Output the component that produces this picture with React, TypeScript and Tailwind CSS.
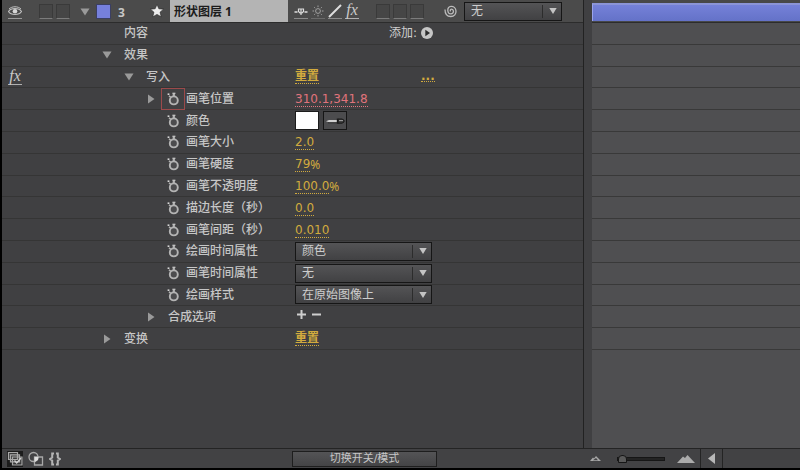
import type { ReactNode } from 'react'

type Row = {
  label: string
  level: 0 | 1 | 2
  arrow?: 'open' | 'closed'
  timer?: boolean
  active?: boolean
  fx?: boolean
  value?: ReactNode
}

const indents = ['pl-0', 'pl-[22px]', 'pl-[44px]']

const Arrow = ({ open }: { open: boolean }) => (
  <svg className="w-[10px] h-[10px]" viewBox="0 0 10 10" fill="#9a9a9a">
    {open ? <path d="M0.5 1.5h9L5 8.5z" /> : <path d="M2 0.5v9L8.5 5z" />}
  </svg>
)

const Stopwatch = () => (
  <svg className="w-3 h-[14px]" viewBox="0 0 12 14" fill="none" stroke="#b4b4b4">
    <circle cx="6.8" cy="8.4" r="4" fill="#4c4c4e" strokeWidth="1.9" />
    <path d="M6.8 4.5V2" strokeWidth="2.2" />
    <path d="M5.4 1.3h3" stroke="#d0d0d0" strokeWidth="1.2" />
    <path d="M0.6 2.2h1.8" stroke="#d8d8d8" strokeWidth="1.6" />
    <path d="M2 3.8l1.8 1.6" strokeWidth="1.5" />
  </svg>
)

const Fx = () => (
  <span className="block w-[14px] h-4 border-b border-[#b0b0b0] text-center font-['Liberation_Serif',serif] italic text-base leading-[14px] text-[#cacaca]">
    fx
  </span>
)

const Value = ({ text, suffix, red, label }: { text: string; suffix?: string; red?: boolean; label: string }) => (
  <button aria-label={label} className={red ? 'flex pt-[2px] text-[#e0747c]' : 'flex pt-[2px] text-[#d2ab3e]'}>
    <span className="border-b border-dotted border-current leading-[13px]">{text}</span>
    <span className="font-['Noto_Sans',sans-serif] leading-[13px]">{suffix}</span>
  </button>
)

const Reset = ({ label }: { label: string }) => (
  <button aria-label={label} className="border-b border-dotted border-[#d2ab3e] text-[#d2ab3e] font-bold leading-[14px]">
    重置
  </button>
)

const Dropdown = ({ label, options, wide }: { label: string; options: string[]; wide?: boolean }) => (
  <div className={wide ? 'relative w-[137px] shrink-0' : 'relative w-[98px] shrink-0'}>
    <select
      aria-label={label}
      className="block appearance-none w-full h-[19px] pl-[6px] border border-[#161616] bg-linear-to-b from-[#545456] to-[#414143] text-[#cecece] leading-[16px]"
    >
      {options.map((o) => (
        <option key={o}>{o}</option>
      ))}
    </select>
    <span className="pointer-events-none absolute inset-y-[3px] right-[5px] flex items-center border-l border-[#2c2c2c] pl-[6px]">
      <svg className="w-2 h-2" viewBox="0 0 8 8" fill="#c4c4c4">
        <path d="M0.3 1h7.4L4 7z" />
      </svg>
    </span>
  </div>
)

const Slot = () => <button aria-label="开关" className="w-[14px] h-[15px] border border-[#3a3a3a] border-b-[#7c7c7c] bg-[#464646]" />

const rows: Row[] = [
  {
    label: '内容',
    level: 0,
    value: (
      <button className="ml-[94px] flex items-center gap-1 text-[#cecece]">
        添加:
        <svg className="w-3 h-3" viewBox="0 0 12 12">
          <circle cx="6" cy="6" r="6" fill="#c6c6c6" />
          <path d="M4.3 2.8v6.4L9 6z" fill="#2c2c2c" />
        </svg>
      </button>
    ),
  },
  { label: '效果', level: 0, arrow: 'open' },
  {
    label: '写入',
    level: 1,
    arrow: 'open',
    fx: true,
    value: (
      <>
        <Reset label="重置写入" />
        <button aria-label="选项" className="ml-[102px] border-b border-dotted border-[#d2ab3e] text-[#d2ab3e] font-bold leading-[10px]">
          ...
        </button>
      </>
    ),
  },
  { label: '画笔位置', level: 2, arrow: 'closed', timer: true, active: true, value: <Value label="画笔位置" text="310.1,341.8" red /> },
  {
    label: '颜色',
    level: 2,
    timer: true,
    value: (
      <div className="flex gap-1">
        <button aria-label="颜色" className="w-6 h-[19px] border border-[#1c1c1c] bg-white" />
        <button aria-label="吸管" className="flex items-center justify-center w-6 h-[19px] border border-[#161616] bg-[#4c4c4e]">
          <svg className="w-5 h-2" viewBox="0 0 20 8">
            <path d="M1 4.2L4 3h9v2.2H4z" fill="#d0d0d0" />
            <path d="M3 5.8h10" stroke="#222" strokeWidth="0.8" />
            <path d="M12.5 1.5v5.2" stroke="#1c1c1c" strokeWidth="1.4" />
            <path d="M13 2h4l2 1.2v1.8L17 6.2h-4z" fill="#3a3a3a" stroke="#181818" />
            <path d="M14 3.6h4" stroke="#a0a0a0" />
          </svg>
        </button>
      </div>
    ),
  },
  { label: '画笔大小', level: 2, timer: true, value: <Value label="画笔大小" text="2.0" /> },
  { label: '画笔硬度', level: 2, timer: true, value: <Value label="画笔硬度" text="79" suffix="%" /> },
  { label: '画笔不透明度', level: 2, timer: true, value: <Value label="画笔不透明度" text="100.0" suffix="%" /> },
  { label: '描边长度（秒）', level: 2, timer: true, value: <Value label="描边长度" text="0.0" /> },
  { label: '画笔间距（秒）', level: 2, timer: true, value: <Value label="画笔间距" text="0.010" /> },
  { label: '绘画时间属性', level: 2, timer: true, value: <Dropdown wide label="绘画时间属性" options={['颜色', '无']} /> },
  { label: '画笔时间属性', level: 2, timer: true, value: <Dropdown wide label="画笔时间属性" options={['无', '大小']} /> },
  { label: '绘画样式', level: 2, timer: true, value: <Dropdown wide label="绘画样式" options={['在原始图像上', '在透明背景上']} /> },
  {
    label: '合成选项',
    level: 2,
    arrow: 'closed',
    value: (
      <div className="flex gap-[6px] pl-[2px] pb-1">
        <button aria-label="添加选项">
          <svg className="block w-[9px] h-[9px]" viewBox="0 0 9 9" stroke="#cecece" strokeWidth="2">
            <path d="M4.5 0v9M0 4.5h9" />
          </svg>
        </button>
        <button aria-label="移除选项">
          <svg className="block w-[9px] h-[9px]" viewBox="0 0 9 9" stroke="#cecece" strokeWidth="2">
            <path d="M0 4.5h9" />
          </svg>
        </button>
      </div>
    ),
  },
  { label: '变换', level: 0, arrow: 'closed', value: <Reset label="重置变换" /> },
]

const PropertyRow = ({ row }: { row: Row }) => (
  <div className="flex items-center border-b border-[#353535]">
    <div className="flex items-center shrink-0 w-[293px]">
      <div className="w-[94px] pl-[6px]">{row.fx && <Fx />}</div>
      <div className={indents[row.level]}>
        <div className="flex justify-center w-[22px]">{row.arrow && <Arrow open={row.arrow === 'open'} />}</div>
      </div>
      {row.timer && (
        <button
          aria-label={'关键帧 ' + row.label}
          className={row.active ? 'flex items-center justify-center w-[22px] h-5 ring-1 ring-[#9c4a4b]' : 'flex items-center justify-center w-[22px] h-5'}
        >
          <Stopwatch />
        </button>
      )}
      <span className={row.timer ? 'ml-[2px] font-medium' : 'ml-[6px] font-medium'}>{row.label}</span>
    </div>
    {row.value}
  </div>
)

const LayerHeader = () => (
  <div className="flex items-center h-[23px] border-b border-[#2c2c2c] bg-[#4b4b4b]">
    <button aria-label="可见性" className="ml-[6px] w-[14px] h-4 border-b border-[#9a9a9a]">
      <svg className="w-[14px] h-3" viewBox="0 0 14 12" fill="none" stroke="#c0c0c0">
        <path d="M0.5 6.5C3 2.5 11 2.5 13.5 6.5C11 10.5 3 10.5 0.5 6.5z" strokeWidth="1.2" />
        <circle cx="7" cy="6.3" r="2.3" fill="#d8d8d8" stroke="none" />
        <path d="M1 4C4 1 10 1 13 4" />
      </svg>
    </button>
    <div className="flex gap-[3px] ml-[17px]">
      <Slot />
      <Slot />
    </div>
    <button aria-label="折叠图层" className="ml-[10px] pt-[2px]">
      <Arrow open />
    </button>
    <span className="ml-[6px] size-[15px] border border-[#3b3f63] bg-[#7680dc]" />
    <span className="ml-[7px] w-[32px] pt-[3px] font-['Noto_Sans',sans-serif] font-bold">3</span>
    <svg className="size-[14px] shrink-0" viewBox="0 0 12 12" fill="#ececec" stroke="#222" strokeWidth="0.5">
      <path d="M6 0.5l1.6 3.6 4 0.3L8.6 7 9.6 11 6 8.9 2.4 11 3.4 7 0.4 4.4l4-0.3z" />
    </svg>
    <span className="ml-[6px] w-[118px] h-full pt-[1px] bg-[#b4b4b4] pl-1 text-[#1c1c1c] font-['Noto_Sans','Noto_Sans_CJK_SC',sans-serif] font-bold leading-[22px]">
      形状图层 1
    </span>
    <div className="flex gap-[3px] ml-[6px]">
      <button aria-label="消隐" className="w-[14px] h-4 border-b border-[#8a8a8a]">
        <svg className="w-[14px] h-3" viewBox="0 0 14 12" fill="none" stroke="#dedede">
          <path d="M0.5 7h3M10.5 7h3" strokeWidth="1.4" />
          <path d="M4.5 4h5v2.5L8 8H6L4.5 6.5zM7 4v6" strokeWidth="1.2" />
        </svg>
      </button>
      <button aria-label="折叠变换" className="w-[14px] h-4 border-b border-[#6a6a6a]">
        <svg className="w-[14px] h-3" viewBox="0 0 14 12" fill="none" stroke="#a0a0a0">
          <circle cx="7" cy="6" r="2.4" />
          <path d="M7 0.5v1.6M7 9.9v1.6M1.5 6h1.6M10.9 6h1.6M3.2 2.2l1 1M9.8 8.8l1 1M3.2 9.8l1-1M9.8 3.2l1-1" />
        </svg>
      </button>
      <button aria-label="品质" className="w-[14px] h-4 border-b border-[#8a8a8a]">
        <svg className="w-[14px] h-[14px]" viewBox="0 0 14 14" stroke="#dedede" strokeWidth="2">
          <path d="M1 13L13 1" />
        </svg>
      </button>
      <button aria-label="效果">
        <Fx />
      </button>
    </div>
    <div className="flex gap-[3px] ml-[17px]">
      <Slot />
      <Slot />
      <Slot />
    </div>
    <svg className="ml-[20px] mr-[7px] size-[13px] shrink-0" viewBox="0 0 13 13" fill="none" stroke="#bcbcbc" strokeWidth="1.3">
      <path d="M1 4.5C1 8.8 3 11.5 6.8 11.5C10.3 11.5 12.2 9 12 6C11.8 3 9.5 1.2 7 1.3C4.8 1.4 3.6 3.5 3.8 5.8C4 8 5.4 9 7 8.9C8.8 8.8 9.6 7.3 9.4 6C9.2 4.6 8 4 7 4.3C6.2 4.6 6 5.6 6.6 6.4" />
    </svg>
    <Dropdown label="父级" options={['无']} />
  </div>
)

const Footer = () => (
  <div className="flex items-center h-5 border-t border-[#242424] bg-[#424244]">
    <div className="flex items-center shrink-0 w-[290px] gap-[5px] pl-[5px]">
      <button aria-label="图层开关" className="bg-[#1c1c1c]">
        <svg className="block size-4" viewBox="0 0 16 16" fill="#3a3a3a" stroke="#a8a8a8" strokeWidth="1.2">
          <path d="M1.5 1.5h9v7h-9zM3.5 3.8h9v7h-9zM5.5 6h9.5v8H5.5z" />
          <path d="M7.5 9.5l2.2 2.5L14 7" fill="none" stroke="#d0d0d0" strokeWidth="1.4" />
        </svg>
      </button>
      <button aria-label="传递控制">
        <svg className="block size-4" viewBox="0 0 16 16" fill="none" stroke="#a8a8a8" strokeWidth="1.3">
          <circle cx="5.5" cy="6" r="4.5" />
          <path d="M6.5 6h8v8h-8z" />
          <path d="M6.5 6h4l-0.5 3-3.5 2z" fill="#dcdcdc" stroke="none" />
        </svg>
      </button>
      <button aria-label="入点出点">
        <svg className="block w-3 h-[14px]" viewBox="0 0 12 14" fill="none" stroke="#b4b4b4" strokeWidth="2">
          <path d="M5 1.5H3.2v4L1 7l2.2 1.5v4H5M7 1.5h1.8v4L11 7 8.8 8.5v4H7" />
        </svg>
      </button>
    </div>
    <button className="shrink-0 w-[145px] h-4 border border-[#1e1e1e] bg-linear-to-b from-[#545456] to-[#444446] text-[11px] leading-[14px]">
      切换开关/模式
    </button>
    <div className="flex items-center ml-[153px] h-full">
      <svg className="w-[11px] h-[5px]" viewBox="0 0 11 5" fill="#a8a8a8">
        <path d="M0 5L3 1.6 4 2.4 6 0 11 5zM3 4.2h5L6 2z" fillRule="evenodd" />
      </svg>
      <input
        type="range"
        aria-label="缩放"
        defaultValue={0}
        className="appearance-none ml-4 mr-3 w-[48px] h-[4px] border border-[#161616] bg-[#242424] [&::-webkit-slider-thumb]:appearance-none [&::-webkit-slider-thumb]:w-[9px] [&::-webkit-slider-thumb]:h-2 [&::-webkit-slider-thumb]:rounded-t-sm [&::-webkit-slider-thumb]:border [&::-webkit-slider-thumb]:border-[#161616] [&::-webkit-slider-thumb]:bg-[#5a5a5a]"
      />
      <svg className="w-[18px] h-2" viewBox="0 0 18 8" fill="#ababab">
        <path d="M0 8L6 1.5 8 3 10.5 0 18 8z" />
      </svg>
      <button aria-label="向左滚动" className="flex items-center justify-center ml-[5px] w-[23px] h-full border-x border-[#242424]">
        <svg className="w-[7px] h-[11px]" viewBox="0 0 7 11" fill="#b8b8b8">
          <path d="M7 0v11L0 5.5z" />
        </svg>
      </button>
    </div>
  </div>
)

const App = () => {
  return (
    <div className="flex flex-col min-h-screen border-l-2 border-b-2 border-black bg-[#404042] text-[#c6c6c6] text-xs font-['DejaVu_Sans','Noto_Sans_CJK_SC',sans-serif]">
      <div className="flex grow">
        <div className="shrink-0 w-[582px] border-r border-[#222]">
          <LayerHeader />
          <div className="grid auto-rows-fr h-[327px]">
            {rows.map((row) => (
              <PropertyRow key={row.label} row={row} />
            ))}
          </div>
        </div>
        <div className="grow pl-2">
          <div className="flex flex-col h-full bg-[#4f4f51]">
            <div className="h-[23px] pt-[3px] border-b border-[#2c2c2c] bg-[#484848]">
              <div className="h-[18px] border-t-2 border-l border-t-[#8b94d6] border-l-[#9aa4ec] bg-linear-to-b from-[#7581d8] to-[#6472c8]" />
            </div>
            <div className="grid auto-rows-fr h-[327px]">
              {rows.map((row) => (
                <div key={row.label} className="border-b border-[#393939]" />
              ))}
            </div>
          </div>
        </div>
      </div>
      <Footer />
    </div>
  )
}

export default App
